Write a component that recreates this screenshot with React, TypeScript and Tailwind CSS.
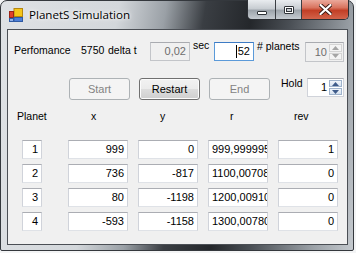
import React from "react";

const ui = { fontFamily: '"Liberation Sans", Arial, sans-serif' };

function TextBox({
  value,
  w = "w-[60px]",
  align = "right",
  disabled = false,
  focused = false,
}: {
  value: string;
  w?: string;
  align?: "left" | "right";
  disabled?: boolean;
  focused?: boolean;
}) {
  const border = focused
    ? "border-[#5b9ad9] border-t-[#3d7bc4]"
    : disabled
    ? "border-[#c3c5c9] border-t-[#a9abb0]"
    : "border-[#d0d3da] border-t-[#abadb3] border-b-[#dfe2e7]";
  return (
    <div
      className={`${w} h-[19px] shrink-0 overflow-hidden whitespace-nowrap border ${border} ${
        disabled ? "bg-[#f0f0f0] text-[#6d6d6d]" : "bg-white text-black"
      } flex items-center ${
        align === "right" ? "justify-end pr-[3px]" : "justify-start pl-[3px]"
      } text-[11px] leading-[13px]`}
    >
      {focused && <span className="mr-[1px] h-[13px] w-[1px] shrink-0 bg-black" />}
      {value}
    </div>
  );
}

function Spinner({ disabled }: { disabled?: boolean }) {
  const arrow = disabled ? "#a5a5a5" : "#3e5b8a";
  const half = disabled
    ? "border border-[#d4d4d4] bg-[#f4f4f4]"
    : "border border-[#9fb3cc] bg-[linear-gradient(#f2f6fb,#d6e2f0)]";
  return (
    <div className="flex h-full w-[14px] flex-col gap-[1px] py-[1px] pr-[1px]">
      <div className={`flex flex-1 items-center justify-center ${half}`}>
        <svg width="7" height="4" viewBox="0 0 7 4">
          <path d="M0 4 L3.5 0 L7 4 Z" fill={arrow} />
        </svg>
      </div>
      <div className={`flex flex-1 items-center justify-center ${half}`}>
        <svg width="7" height="4" viewBox="0 0 7 4">
          <path d="M0 0 L3.5 4 L7 0 Z" fill={arrow} />
        </svg>
      </div>
    </div>
  );
}

function NumBox({
  value,
  w,
  h,
  disabled,
}: {
  value: string;
  w: string;
  h: string;
  disabled?: boolean;
}) {
  return (
    <div
      className={`${w} ${h} flex shrink-0 border ${
        disabled
          ? "border-[#c3c5c9] border-t-[#a9abb0] bg-[#f0f0f0] text-[#6d6d6d]"
          : "border-[#d0d3da] border-t-[#abadb3] bg-white text-black"
      } text-[11px] leading-[13px]`}
    >
      <div className="flex flex-1 items-center justify-end pr-[2px]">{value}</div>
      <Spinner disabled={disabled} />
    </div>
  );
}

function Btn({ label, disabled }: { label: string; disabled?: boolean }) {
  return (
    <div
      className={`flex h-[22px] w-[61px] shrink-0 items-center justify-center rounded-[3px] border text-[11px] ${
        disabled
          ? "border-[#adb2b5] bg-[#f4f4f4] text-[#838383]"
          : "border-[#707070] bg-[linear-gradient(#f2f2f2_0%,#ebebeb_50%,#dddddd_51%,#cfcfcf_100%)] text-black shadow-[inset_0_0_0_1px_#fcfcfc]"
      }`}
    >
      {label}
    </div>
  );
}

const rows = [
  { n: "1", x: "999", y: "0", r: "999,999995", rev: "1" },
  { n: "2", x: "736", y: "-817", r: "1100,00708", rev: "0" },
  { n: "3", x: "80", y: "-1198", r: "1200,00910", rev: "0" },
  { n: "4", x: "-593", y: "-1158", r: "1300,00780", rev: "0" },
];

function AppIcon() {
  return (
    <svg width="14" height="14" viewBox="0 0 14 14">
      <rect x="5" y="0.5" width="8.5" height="8" fill="#f5c518" stroke="#b5860d" />
      <rect x="0.5" y="3.5" width="4" height="6" fill="#e0402a" stroke="#9c2416" />
      <rect x="5" y="9.5" width="8.5" height="4" fill="#4e7fd6" stroke="#2f5aa3" />
      <rect x="0.5" y="10.5" width="4" height="3" fill="#8fb0e8" stroke="#2f5aa3" />
    </svg>
  );
}

export default function App() {
  return (
    <div className="h-[253px] w-[356px] overflow-hidden bg-[#f3f4f5]" style={ui}>
      <div className="flex h-[251px] w-[354px] flex-col rounded-t-[7px] rounded-b-[2px] border border-[#34383d] bg-[linear-gradient(100deg,#dfe2e5_0%,#d3d7db_30%,#9aa0a6_42%,#3a3e43_52%,#24272b_64%,#4a4f55_74%,#9ca2a8_90%,#c4c9ce_100%)]">
        {/* title bar */}
        <div className="flex h-[28px] items-start justify-between">
          <div className="flex items-center pl-[8px] pt-[7px]">
            <AppIcon />
            <span
              className="ml-[6px] text-[11.6px] leading-[14px] text-black [text-shadow:0_0_6px_#ffffff,0_0_3px_#ffffff]"
              style={{ fontFamily: '"Open Sans", "Noto Sans", sans-serif' }}
            >
              PlanetS Simulation
            </span>
          </div>
          <div className="mr-[4px] -mt-[1px] flex h-[20px] overflow-hidden rounded-b-[5px] border border-t-0 border-[#2d3035] shadow-[inset_0_0_0_1px_rgba(255,255,255,0.45)]">
            <div className="flex w-[28px] items-center justify-center border-r border-[#3a3e43] bg-[linear-gradient(#e9ecef_0%,#c8cdd2_45%,#9da4ab_55%,#c5cbd1_100%)]">
              <div className="mt-[6px] h-[4px] w-[10px] rounded-[1px] border border-[#2f3338] bg-white" />
            </div>
            <div className="flex w-[26px] items-center justify-center border-r border-[#3a3e43] bg-[linear-gradient(#e9ecef_0%,#c8cdd2_45%,#9da4ab_55%,#c5cbd1_100%)]">
              <div className="h-[8px] w-[10px] rounded-[1px] border border-[#2f3338] bg-white p-[1px]">
                <div className="h-full w-full border border-[#2f3338] bg-[#c9ced3]" />
              </div>
            </div>
            <div className="flex w-[46px] items-center justify-center bg-[linear-gradient(#eba99b_0%,#d9745f_40%,#c23f26_55%,#d2634a_100%)]">
              <svg width="13" height="11" viewBox="0 0 13 11">
                <path
                  d="M1.5 1 L11.5 10 M11.5 1 L1.5 10"
                  stroke="#3a1a14"
                  strokeWidth="4"
                  strokeLinecap="round"
                />
                <path
                  d="M1.5 1 L11.5 10 M11.5 1 L1.5 10"
                  stroke="#ffffff"
                  strokeWidth="2.2"
                  strokeLinecap="round"
                />
              </svg>
            </div>
          </div>
        </div>

        {/* client area */}
        <div className="ml-[6px] flex h-[216px] w-[341px] flex-col border border-[#4b4f55] bg-[#f0f0f0] text-[10.5px] leading-[13px] text-black">
          {/* row 1 */}
          <div className="mt-[12px] flex h-[20px] items-start pl-[6px]">
            <span className="mt-[2px] w-[67px]">Perfomance</span>
            <span className="mt-[2px] w-[27px]">5750</span>
            <span className="mt-[2px] w-[42px]">delta t</span>
            <TextBox value="0,02" w="w-[40px]" disabled />
            <span className="-mt-[3px] ml-[3px] w-[21px]">sec</span>
            <TextBox value="52" w="w-[40px]" focused />
            <span className="-mt-[2px] ml-[3px] w-[48px]">&#35; planets</span>
            <NumBox value="10" w="w-[39px]" h="h-[20px]" disabled />
          </div>

          {/* row 2 */}
          <div className="mt-[16px] flex items-start pl-[61px]">
            <Btn label="Start" disabled />
            <div className="w-[9px]" />
            <Btn label="Restart" />
            <div className="w-[9px]" />
            <Btn label="End" disabled />
            <span className="ml-[11px] -mt-[1px] w-[26px]">Hold</span>
            <NumBox value="1" w="w-[37px]" h="h-[19px]" />
          </div>

          {/* header */}
          <div className="mt-[10px] flex pl-[9px]">
            <span className="w-[74px]">Planet</span>
            <span className="w-[69px]">x</span>
            <span className="w-[70px]">y</span>
            <span className="w-[64px]">r</span>
            <span>rev</span>
          </div>

          {/* data rows */}
          <div className="mt-[17px] flex flex-col gap-[5px] pl-[14px]">
            {rows.map((r) => (
              <div key={r.n} className="flex">
                <TextBox value={r.n} w="w-[20px]" />
                <div className="w-[26px]" />
                <TextBox value={r.x} />
                <div className="w-[10px]" />
                <TextBox value={r.y} />
                <div className="w-[10px]" />
                <TextBox value={r.r} align="left" />
                <div className="w-[10px]" />
                <TextBox value={r.rev} />
              </div>
            ))}
          </div>
        </div>
      </div>
    </div>
  );
}
